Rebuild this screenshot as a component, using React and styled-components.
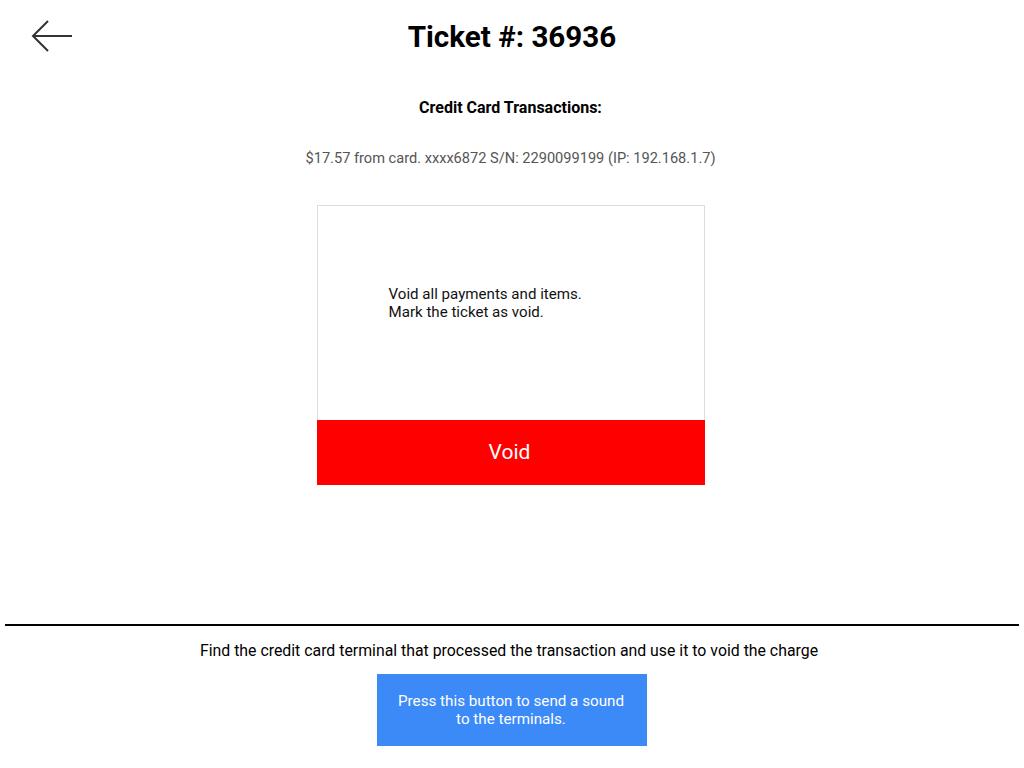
import React from 'react';
import styled, { createGlobalStyle } from 'styled-components';

const GlobalStyle = createGlobalStyle`
  html, body {
    margin: 0;
    padding: 0;
    background: #fff;
  }
  body {
    font-family: Roboto, "Liberation Sans", sans-serif;
    color: #000;
  }
`;

const Page = styled.div`
  display: flex;
  flex-direction: column;
  min-height: 100vh;
`;

const Header = styled.header`
  display: grid;
  grid-template-columns: 120px 1fr 120px;
  align-items: center;
  height: 74px;
`;

const BackButton = styled.button`
  justify-self: start;
  margin-left: 30px;
  padding: 0;
  border: none;
  background: none;
  cursor: pointer;
  display: flex;
`;

const Title = styled.h1`
  margin: 0;
  text-align: center;
  font-size: 29.6px;
  font-weight: 700;
`;

const Main = styled.main`
  flex: 1;
  display: flex;
  flex-direction: column;
  align-items: center;
  padding-right: 3px;
`;

const SectionTitle = styled.h2`
  margin: 25px 0 0;
  font-size: 16px;
  font-weight: 700;
  line-height: 18px;
`;

const Transaction = styled.p`
  margin: 32px 0 0;
  font-size: 14.6px;
  line-height: 18px;
  color: #555;
`;

const Card = styled.div`
  margin-top: 38px;
  width: 388px;
  display: flex;
  flex-direction: column;
`;

const CardBody = styled.div`
  height: 215px;
  border: 1px solid #ddd;
  border-bottom: none;
  padding: 79px 20px 0 71px;
  box-sizing: border-box;
  font-size: 15.1px;
  line-height: 18px;
  color: #111;
`;

const VoidButton = styled.button`
  height: 65px;
  border: none;
  background: #ff0000;
  color: #fff;
  font-family: inherit;
  font-size: 21px;
  padding: 0 2px 2px 0;
  cursor: pointer;
`;

const Footer = styled.footer`
  display: flex;
  flex-direction: column;
  align-items: center;
  padding-bottom: 22px;
`;

const Divider = styled.hr`
  align-self: stretch;
  margin: 0 5px;
  border: none;
  border-top: 2px solid #000;
`;

const Hint = styled.p`
  margin: 15px 6px 0 0;
  font-size: 15.85px;
  line-height: 20px;
`;

const SoundButton = styled.button`
  margin-top: 13px;
  width: 270px;
  height: 72px;
  border: none;
  background: #3c8af7;
  color: #fff;
  font-family: inherit;
  font-size: 15.2px;
  line-height: 18px;
  padding: 0 22px 0 20px;
  cursor: pointer;
`;

const ArrowIcon = () => (
  <svg width="44" height="36" viewBox="0 0 44 36" fill="none" stroke="#333" strokeWidth="2">
    <path d="M42 17H3" />
    <path d="M18 2L3 17L18 32" />
  </svg>
);

export default function App() {
  return (
    <Page>
      <GlobalStyle />
      <Header>
        <BackButton aria-label="Back">
          <ArrowIcon />
        </BackButton>
        <Title>Ticket #: 36936</Title>
      </Header>
      <Main>
        <SectionTitle>Credit Card Transactions:</SectionTitle>
        <Transaction>$17.57 from card. xxxx6872 S/N: 2290099199 (IP: 192.168.1.7)</Transaction>
        <Card>
          <CardBody>
            Void all payments and items.
            <br />
            Mark the ticket as void.
          </CardBody>
          <VoidButton>Void</VoidButton>
        </Card>
      </Main>
      <Footer>
        <Divider />
        <Hint>Find the credit card terminal that processed the transaction and use it to void the charge</Hint>
        <SoundButton>Press this button to send a sound to the terminals.</SoundButton>
      </Footer>
    </Page>
  );
}
